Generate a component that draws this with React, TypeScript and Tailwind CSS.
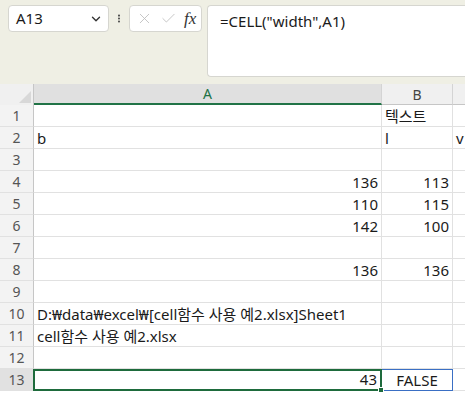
import { ChevronDown, X, Check, EllipsisVertical } from 'lucide-react';

type Row = {
  n: number;
  a?: string;
  b?: string;
  c?: string;
  aAlign?: 'left' | 'right';
  bAlign?: 'left' | 'right' | 'center';
};

const ROWS: Row[] = [
  { n: 1, b: '텍스트' },
  { n: 2, a: 'b', b: 'l', c: 'v' },
  { n: 3 },
  { n: 4, a: '136', b: '113', aAlign: 'right', bAlign: 'right' },
  { n: 5, a: '110', b: '115', aAlign: 'right', bAlign: 'right' },
  { n: 6, a: '142', b: '100', aAlign: 'right', bAlign: 'right' },
  { n: 7 },
  { n: 8, a: '136', b: '136', aAlign: 'right', bAlign: 'right' },
  { n: 9 },
  { n: 10, a: 'D:₩data₩excel₩[cell함수 사용 예2.xlsx]Sheet1' },
  { n: 11, a: 'cell함수 사용 예2.xlsx' },
  { n: 12 },
  { n: 13, a: '43', b: 'FALSE', aAlign: 'right', bAlign: 'center' },
];

const alignCls = (al?: string) =>
  al === 'right' ? 'justify-end pr-[3px]' : al === 'center' ? 'justify-center' : 'justify-start pl-[3px]';

export default function App() {
  return (
    <div
      className="w-[465px] h-[396px] overflow-hidden bg-white text-[#1a1a1a]"
      style={{ fontFamily: '"Noto Sans", "Noto Sans CJK KR", sans-serif' }}
    >
      {/* Formula bar */}
      <div className="h-[84px] bg-[#efefe4] flex items-start gap-[5px] pl-[8px] pt-[5px]">
        <div className="w-[101px] h-[27px] bg-white border border-[#d6d6d0] rounded-[4px] flex items-center justify-between pl-[7px] pr-[5px]">
          <span className="text-[15px] leading-none">A13</span>
          <ChevronDown size={14} strokeWidth={2.4} className="text-[#333]" />
        </div>
        <div className="w-[10px] h-[27px] flex items-center justify-center text-[#444]">
          <EllipsisVertical size={15} strokeWidth={3} />
        </div>
        <div className="w-[73px] h-[27px] bg-white border border-[#d6d6d0] rounded-[4px] flex items-center pl-[6px] gap-[7px]">
          <X size={17} strokeWidth={1.2} className="text-[#bdbdbd]" />
          <Check size={17} strokeWidth={1.2} className="text-[#bdbdbd]" />
          <span
            className="text-[17px] italic leading-none text-[#333]"
            style={{ fontFamily: '"Liberation Serif", serif' }}
          >
            fx
          </span>
        </div>
        <div className="flex-1 h-[72px] bg-white border border-[#d6d6d0] border-r-0 rounded-l-[4px] pl-[12px] pt-[3px]">
          <span className="text-[15px]">=CELL("width",A1)</span>
        </div>
      </div>

      {/* Column headers */}
      <div className="flex h-[21px] bg-[#f0f0f0]">
        <div className="w-[34px] border-r border-[#c6c6c6] relative">
          <div className="absolute right-[2px] bottom-[2px] w-0 h-0 border-l-[12px] border-l-transparent border-b-[12px] border-b-[#d8d8d8]" />
        </div>
        <div className="w-[348px] bg-[#e0e0e0] border-r border-[#d4d4d4] border-b-2 border-b-[#217346] flex items-center justify-center text-[14px] text-[#217346]">
          A
        </div>
        <div className="w-[71px] border-r border-[#d4d4d4] border-b border-b-[#c6c6c6] flex items-center justify-center text-[14px] text-[#444]">
          B
        </div>
        <div className="flex-1 border-b border-b-[#c6c6c6]" />
      </div>

      {/* Grid */}
      {ROWS.map((r) => {
        const sel = r.n === 13;
        return (
          <div key={r.n} className="flex h-[22px] text-[15px] leading-[20px]">
            <div
              className={`w-[34px] border-r border-[#c6c6c6] border-b border-b-[#e1e1e1] flex items-center justify-center text-[14px] text-[#555] ${
                sel ? 'bg-[#e1e1e1]' : 'bg-[#f3f3f3]'
              }`}
            >
              {r.n}
            </div>
            <div
              className={`w-[348px] relative flex items-end whitespace-nowrap ${alignCls(r.aAlign)} ${
                sel ? 'border-2 border-[#1e6b3c] -ml-[1px] w-[349px]' : 'border-r border-b border-[#e1e1e1]'
              }`}
            >
              {r.a}
              {sel && <div className="absolute -right-[4px] -bottom-[4px] w-[6px] h-[6px] bg-[#1e6b3c] border border-white" />}
            </div>
            <div
              className={`w-[71px] flex items-end whitespace-nowrap ${alignCls(r.bAlign)} ${
                sel ? 'border border-[#3a6fc4] border-l-0' : 'border-r border-b border-[#e1e1e1]'
              }`}
            >
              {r.b}
            </div>
            <div className="flex-1 flex items-end pl-[3px] border-b border-[#e1e1e1]">{r.c}</div>
          </div>
        );
      })}
    </div>
  );
}
